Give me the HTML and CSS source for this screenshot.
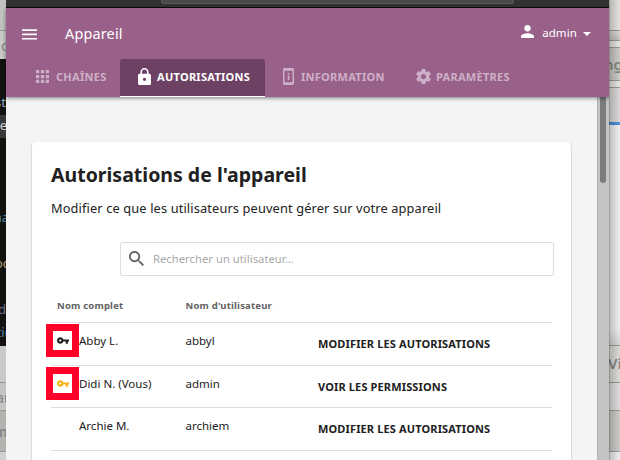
FILE: index.html
```html
<!DOCTYPE html>
<html lang="fr">
<head>
<meta charset="utf-8">
<title>Appareil</title>
<link rel="stylesheet" href="styles.css">
</head>
<body>
<div class="desktop">
  <aside class="behind behind-left">
    <div class="pane top"></div>
    <div class="pane tab"><span class="dim">c</span></div>
    <div class="terminal">
      <span class="code blue l1">st</span>
      <span class="code current l2">e</span>
      <span class="code cyan l3">na</span>
      <span class="code sand l4">oc</span>
      <span class="code violet l5">d</span>
      <span class="code cyan l6">tie</span>
    </div>
    <div class="pane bar"></div>
    <div class="pane row"><span class="dim">ar</span></div>
    <div class="pane dark"><span class="dim strong">m</span></div>
    <div class="pane rest"></div>
  </aside>

  <main class="window">
    <div class="chrome"><div class="address"></div></div>
    <header class="header">
      <div class="appbar">
        <svg class="menu" viewBox="0 0 15 11"><path d="M0 .3h15v1.7H0zM0 4.6h15v1.7H0zM0 8.9h15v1.7H0z"/></svg>
        <span class="app-title">Appareil</span>
        <div class="user">
          <svg class="person" viewBox="4 4 16 16"><path d="M12 12c2.21 0 4-1.79 4-4s-1.79-4-4-4-4 1.79-4 4 1.79 4 4 4zm0 2c-2.67 0-8 1.34-8 4v2h16v-2c0-2.66-5.33-4-8-4z"/></svg>
          <span class="user-name">admin</span>
          <svg class="caret" viewBox="0 0 10 5"><path d="M0 0h10L5 5z"/></svg>
        </div>
      </div>
      <nav class="tabs">
        <a class="tab-link channels"><svg viewBox="4 4 16 16"><path d="M4 8h4V4H4zm6 12h4v-4h-4zm-6 0h4v-4H4zm0-6h4v-4H4zm6 0h4v-4h-4zm6-10v4h4V4zm-6 4h4V4h-4zm6 6h4v-4h-4zm0 6h4v-4h-4z"/></svg><span>CHAÎNES</span></a>
        <a class="tab-link active"><svg viewBox="4 1 16 21"><path d="M18 8h-1V6c0-2.76-2.24-5-5-5S7 3.24 7 6v2H6c-1.1 0-2 .9-2 2v10c0 1.1.9 2 2 2h12c1.1 0 2-.9 2-2V10c0-1.100-.9-2-2-2zm-6 9c-1.1 0-2-.9-2-2s.9-2 2-2 2 .9 2 2-.9 2-2 2zm3.100-9H8.900V6c0-1.710 1.390-3.100 3.100-3.100s3.100 1.390 3.100 3.100z"/></svg><span>AUTORISATIONS</span></a>
        <a class="tab-link info"><svg viewBox="0 0 11 17"><path fill-rule="evenodd" d="M1.400 0h8.200Q11 0 11 1.400v14.200Q11 17 9.600 17H1.400Q0 17 0 15.600V1.400Q0 0 1.400 0zM1.500 2.800v11.400h8V2.800zM4.700 5h1.700v1.700H4.700zM4.700 7.600h1.700v4.400H4.700z"/></svg><span>INFORMATION</span></a>
        <a class="tab-link settings"><svg viewBox="2 2 20 20"><path d="M19.430 12.980c.04-.32.070-.64.070-.98s-.03-.66-.07-.98l2.110-1.650c.19-.15.240-.42.120-.64l-2-3.460c-.12-.22-.39-.3-.61-.22l-2.490 1c-.52-.4-1.080-.73-1.690-.98l-.38-2.650C14.460 2.180 14.250 2 14 2h-4c-.25 0-.46.180-.49.420l-.38 2.650c-.61.250-1.170.590-1.690.98l-2.490-1c-.23-.09-.49 0-.61.220l-2 3.460c-.13.220-.07.490.12.640l2.110 1.650c-.04.320-.07.650-.07.980s.03.660.070.980l-2.110 1.650c-.19.150-.24.420-.12.640l2 3.460c.12.220.39.300.61.220l2.490-1c.52.400 1.080.730 1.690.980l.38 2.650c.03.240.24.420.49.420h4c.25 0 .46-.18.490-.42l.38-2.650c.61-.25 1.170-.59 1.690-.98l2.490 1c.23.090.49 0 .61-.22l2-3.460c.12-.22.070-.49-.12-.64zM12 15.500c-1.930 0-3.500-1.570-3.500-3.500s1.570-3.500 3.500-3.500 3.500 1.570 3.500 3.500-1.570 3.500-3.500 3.500z"/></svg><span>PARAMÈTRES</span></a>
      </nav>
    </header>
    <div class="viewport">
      <div class="page">
        <section class="card">
          <h1>Autorisations de l'appareil</h1>
          <p class="intro">Modifier ce que les utilisateurs peuvent gérer sur votre appareil</p>
          <div class="search">
            <svg viewBox="3 3 17.500 17.500"><path d="M15.500 14h-.79l-.28-.27C15.410 12.590 16 11.110 16 9.500 16 5.910 13.090 3 9.500 3S3 5.910 3 9.500 5.910 16 9.500 16c1.610 0 3.090-.59 4.230-1.570l.27.280v.79l5 4.990L20.490 19zm-6 0C7.010 14 5 11.990 5 9.500S7.010 5 9.500 5 14 7.010 14 9.500 11.990 14 9.500 14z"/></svg>
            <span>Rechercher un utilisateur...</span>
          </div>
          <div class="table">
            <div class="tr head"><span class="name">Nom complet</span><span class="login">Nom d'utilisateur</span></div>
            <div class="tr">
              <span class="mark key-dark"><svg viewBox="1 6 22 12"><path d="M12.650 10C11.830 7.670 9.610 6 7 6c-3.310 0-6 2.690-6 6s2.690 6 6 6c2.610 0 4.830-1.670 5.650-4H17v4h4v-4h2v-4zM7 14c-1.100 0-2-.9-2-2s.9-2 2-2 2 .9 2 2-.9 2-2 2z"/></svg></span>
              <span class="name">Abby L.</span><span class="login">abbyl</span><span class="action">MODIFIER LES AUTORISATIONS</span>
            </div>
            <div class="tr second">
              <span class="mark key-gold"><svg viewBox="1 6 22 12"><path d="M12.650 10C11.830 7.670 9.610 6 7 6c-3.310 0-6 2.690-6 6s2.690 6 6 6c2.610 0 4.830-1.670 5.650-4H17v4h4v-4h2v-4zM7 14c-1.100 0-2-.9-2-2s.9-2 2-2 2 .9 2 2-.9 2-2 2z"/></svg></span>
              <span class="name">Didi N. (Vous)</span><span class="login">admin</span><span class="action">VOIR LES PERMISSIONS</span>
            </div>
            <div class="tr">
              <span class="name">Archie M.</span><span class="login">archiem</span><span class="action">MODIFIER LES AUTORISATIONS</span>
            </div>
          </div>
        </section>
      </div>
      <div class="scrollbar"><div class="thumb"></div></div>
    </div>
  </main>

  <aside class="behind behind-right">
    <div class="pane top"></div>
    <div class="pane strip"></div>
    <div class="pane gap"></div>
    <div class="pane tool"><span class="dim strong">ng</span></div>
    <div class="pane gap"></div>
    <div class="pane accent"></div>
    <div class="pane blank"></div>
    <div class="pane bar"><span class="dim strong">Vi</span></div>
    <div class="pane row"></div>
    <div class="pane dark"></div>
    <div class="pane rest"></div>
  </aside>
</div>
</body>
</html>
```
FILE: styles.css
```css
* { box-sizing: border-box; }
body {
  margin: 0;
  width: 620px;
  height: 460px;
  overflow: hidden;
  font-family: "Noto Sans", sans-serif;
  color: #212121;
}
svg { display: block; fill: currentColor; flex: none; }
.desktop { display: flex; height: 460px; }

/* Windows showing behind the main one */
.behind { display: flex; flex-direction: column; overflow: hidden; position: relative; flex: none; }
.behind-left { width: 6px; }
.behind-right { width: 11px; }
.behind-right::after {
  content: "";
  position: absolute;
  inset: 0;
  background: linear-gradient(to right, rgba(0,0,0,.4) 0, rgba(0,0,0,.18) 1.500px, rgba(0,0,0,.03) 9px, transparent);
}
.pane { display: flex; align-items: center; flex: none; overflow: hidden; border-bottom: 1px solid #999; }
.behind-left .pane { justify-content: flex-end; }
.dim { color: #858786; font-size: 15px; line-height: 20px; flex: none; }
.strong { font-weight: 600; }
.behind-left .dim { margin-right: -2px; }
.behind-left .row .dim { margin-right: -4px; }
.behind-left .dark .dim { margin-right: -7px; }
.behind-left .top { height: 31px; background: #c3c3c1; }
.behind-left .tab { height: 28px; background: #cbcbc9; border: 0; }
.terminal { height: 287px; background: #12130f; padding-top: 33px; flex: none; }
.code { display: flex; justify-content: flex-end; height: 23px; line-height: 23px; font-size: 13px; }
.blue { color: #8da3c4; }
.cyan { color: #5088b0; }
.sand { color: #b39a74; }
.violet { color: #6c6b8a; }
.current { color: #d0d0d0; background: #383838; }
.l1 { line-height: 21px; }
.l2 { margin-right: -1px; line-height: 21px; }
.l3 { margin: 68px -3px 0 0; }
.l4 { margin: 23px -3px 0 0; }
.l5 { margin-top: 23px; }
.l6 { margin-right: -6px; }
.behind-left .bar { height: 37px; background: #c9c9c7; }
.behind-left .row { height: 28px; background: #c5c5c3; }
.behind-left .dark { height: 41px; background: #b2b2af; }
.behind-left .rest { height: 8px; background: #d0d0ce; border: 0; }
.behind-right .top { height: 31px; background: #e3e2df; }
.behind-right .strip { height: 10px; background: linear-gradient(#d9d8d5, #c0bfbc); }
.behind-right .gap { height: 7px; background: #e5e4e1; }
.behind-right .tool { height: 33px; background: #cbc9c5; }
.behind-right .tool .dim { margin-left: -5px; }
.behind-right .accent { height: 37px; background: #d9d8d6; border-bottom: 3px solid #4a90d9; }
.behind-right .blank { height: 221px; background: linear-gradient(#eee 93%, #d3d3d2); }
.behind-right .bar { height: 37px; background: #dad9d6; }
.behind-right .bar .dim { margin: -2px 0 0 -1px; }
.behind-right .row { height: 28px; background: #dedddb; }
.behind-right .dark { height: 41px; background: #cccac6; }
.behind-right .rest { height: 8px; background: #eee; border: 0; }

/* Browser window */
.window { width: 603px; display: flex; flex-direction: column; flex: none; position: relative; }
.chrome { height: 8px; background: #323234; border-bottom: 1px solid #0c0c0d; flex: none; }
.address { width: 353px; height: 4px; margin-left: 155px; background: #474749; border: 1px solid #5b5b5d; border-top: 0; border-radius: 0 0 3px 3px; }
.header { height: 89px; background: #996189; color: #fff; flex: none; position: relative; box-shadow: 0 1px 4px rgba(0,0,0,.5); }
.appbar { height: 51px; display: flex; align-items: center; padding: 1px 18px 0 16px; }
.menu { width: 15px; height: 11px; }
.app-title { margin: -2px 0 0 28px; font-size: 14.400px; letter-spacing: .2px; }
.user { margin: -3px 0 0 auto; display: flex; align-items: center; font-size: 11.500px; letter-spacing: .1px; }
.person { width: 13px; height: 13px; margin: -3px 8px 0 0; }
.caret { width: 8px; height: 4px; margin: 2px 0 0 6px; }
.tabs { display: flex; height: 38px; font-size: 11px; letter-spacing: .28px; font-weight: 700; }
.tab-link { display: flex; align-items: center; color: #ceb0c6; white-space: nowrap; padding-bottom: 3px; }
.tab-link span { margin-top: -1px; }
.channels { width: 114px; padding-left: 30px; }
.channels svg { width: 13px; height: 13px; margin-right: 7px; }
.active { width: 145px; padding-left: 18px; background: #6d4164; color: #fff; border-bottom: 1px solid #fff; border-radius: 3px 3px 0 0; padding-bottom: 2px; }
.active svg { width: 13px; height: 17px; margin: -1px 6px 0 0; }
.info { width: 133px; padding-left: 18px; }
.info svg { width: 11px; height: 17px; margin-right: 7px; }
.settings { padding-left: 18px; }
.settings svg { width: 15px; height: 15px; margin-right: 5px; }

.viewport { display: flex; height: 363px; }
.page { width: 591px; background: #f4f4f4; padding: 45px 26px 0; overflow: hidden; }
.card { height: 400px; background: #fff; border-radius: 3px; box-shadow: 0 1px 2px rgba(0,0,0,.35); padding: 19px 18px 0 19px; }
h1 { margin: 0; font-size: 19.500px; line-height: 28px; }
.intro { margin: 9px 0 0; font-size: 12.800px; letter-spacing: .13px; line-height: 20px; white-space: nowrap; }
.search { width: 434px; height: 34px; margin: 24px 0 0 69px; display: flex; align-items: center; border: 1px solid #dedede; border-radius: 2px; padding-left: 8px; font-size: 11.200px; letter-spacing: .05px; color: #aaa; }
.search svg { width: 15px; height: 15px; color: #616161; margin: -2px 9px 0 0; }
.search span { margin-top: -2px; }
.scrollbar { width: 12px; background: #c3c5c3; border-left: 1px solid #b3b4b3; padding-left: 2px; }
.thumb { width: 6px; height: 86px; background: #7b7d7c; border-radius: 0 0 3px 3px; }

.table { width: 501px; margin-top: 12px; }
.tr { display: grid; grid-template-columns: 28px 106.500px 132.500px 1fr; align-items: center; height: 43px; border-bottom: 1px solid #dedede; font-size: 11.500px; padding-bottom: 8px; }
.tr.second { height: 42px; padding-bottom: 7px; }
.tr .name { grid-column: 2; }
.tr .login { grid-column: 3; }
.tr .action { grid-column: 4; font-weight: 700; font-size: 11px; letter-spacing: .14px; padding-top: 6px; }
.tr.head { height: 35px; grid-template-columns: 6px 128.500px 1fr; font-size: 9.500px; letter-spacing: .2px; font-weight: 700; color: #616161; padding: 0; }
.mark { grid-column: 1; width: 33px; height: 33px; margin-left: -5px; border: 7px solid #ff0029; display: flex; align-items: center; padding-left: 4px; }
.mark svg { width: 12px; height: 7px; }
.key-gold { color: #f9b20e; }
```
